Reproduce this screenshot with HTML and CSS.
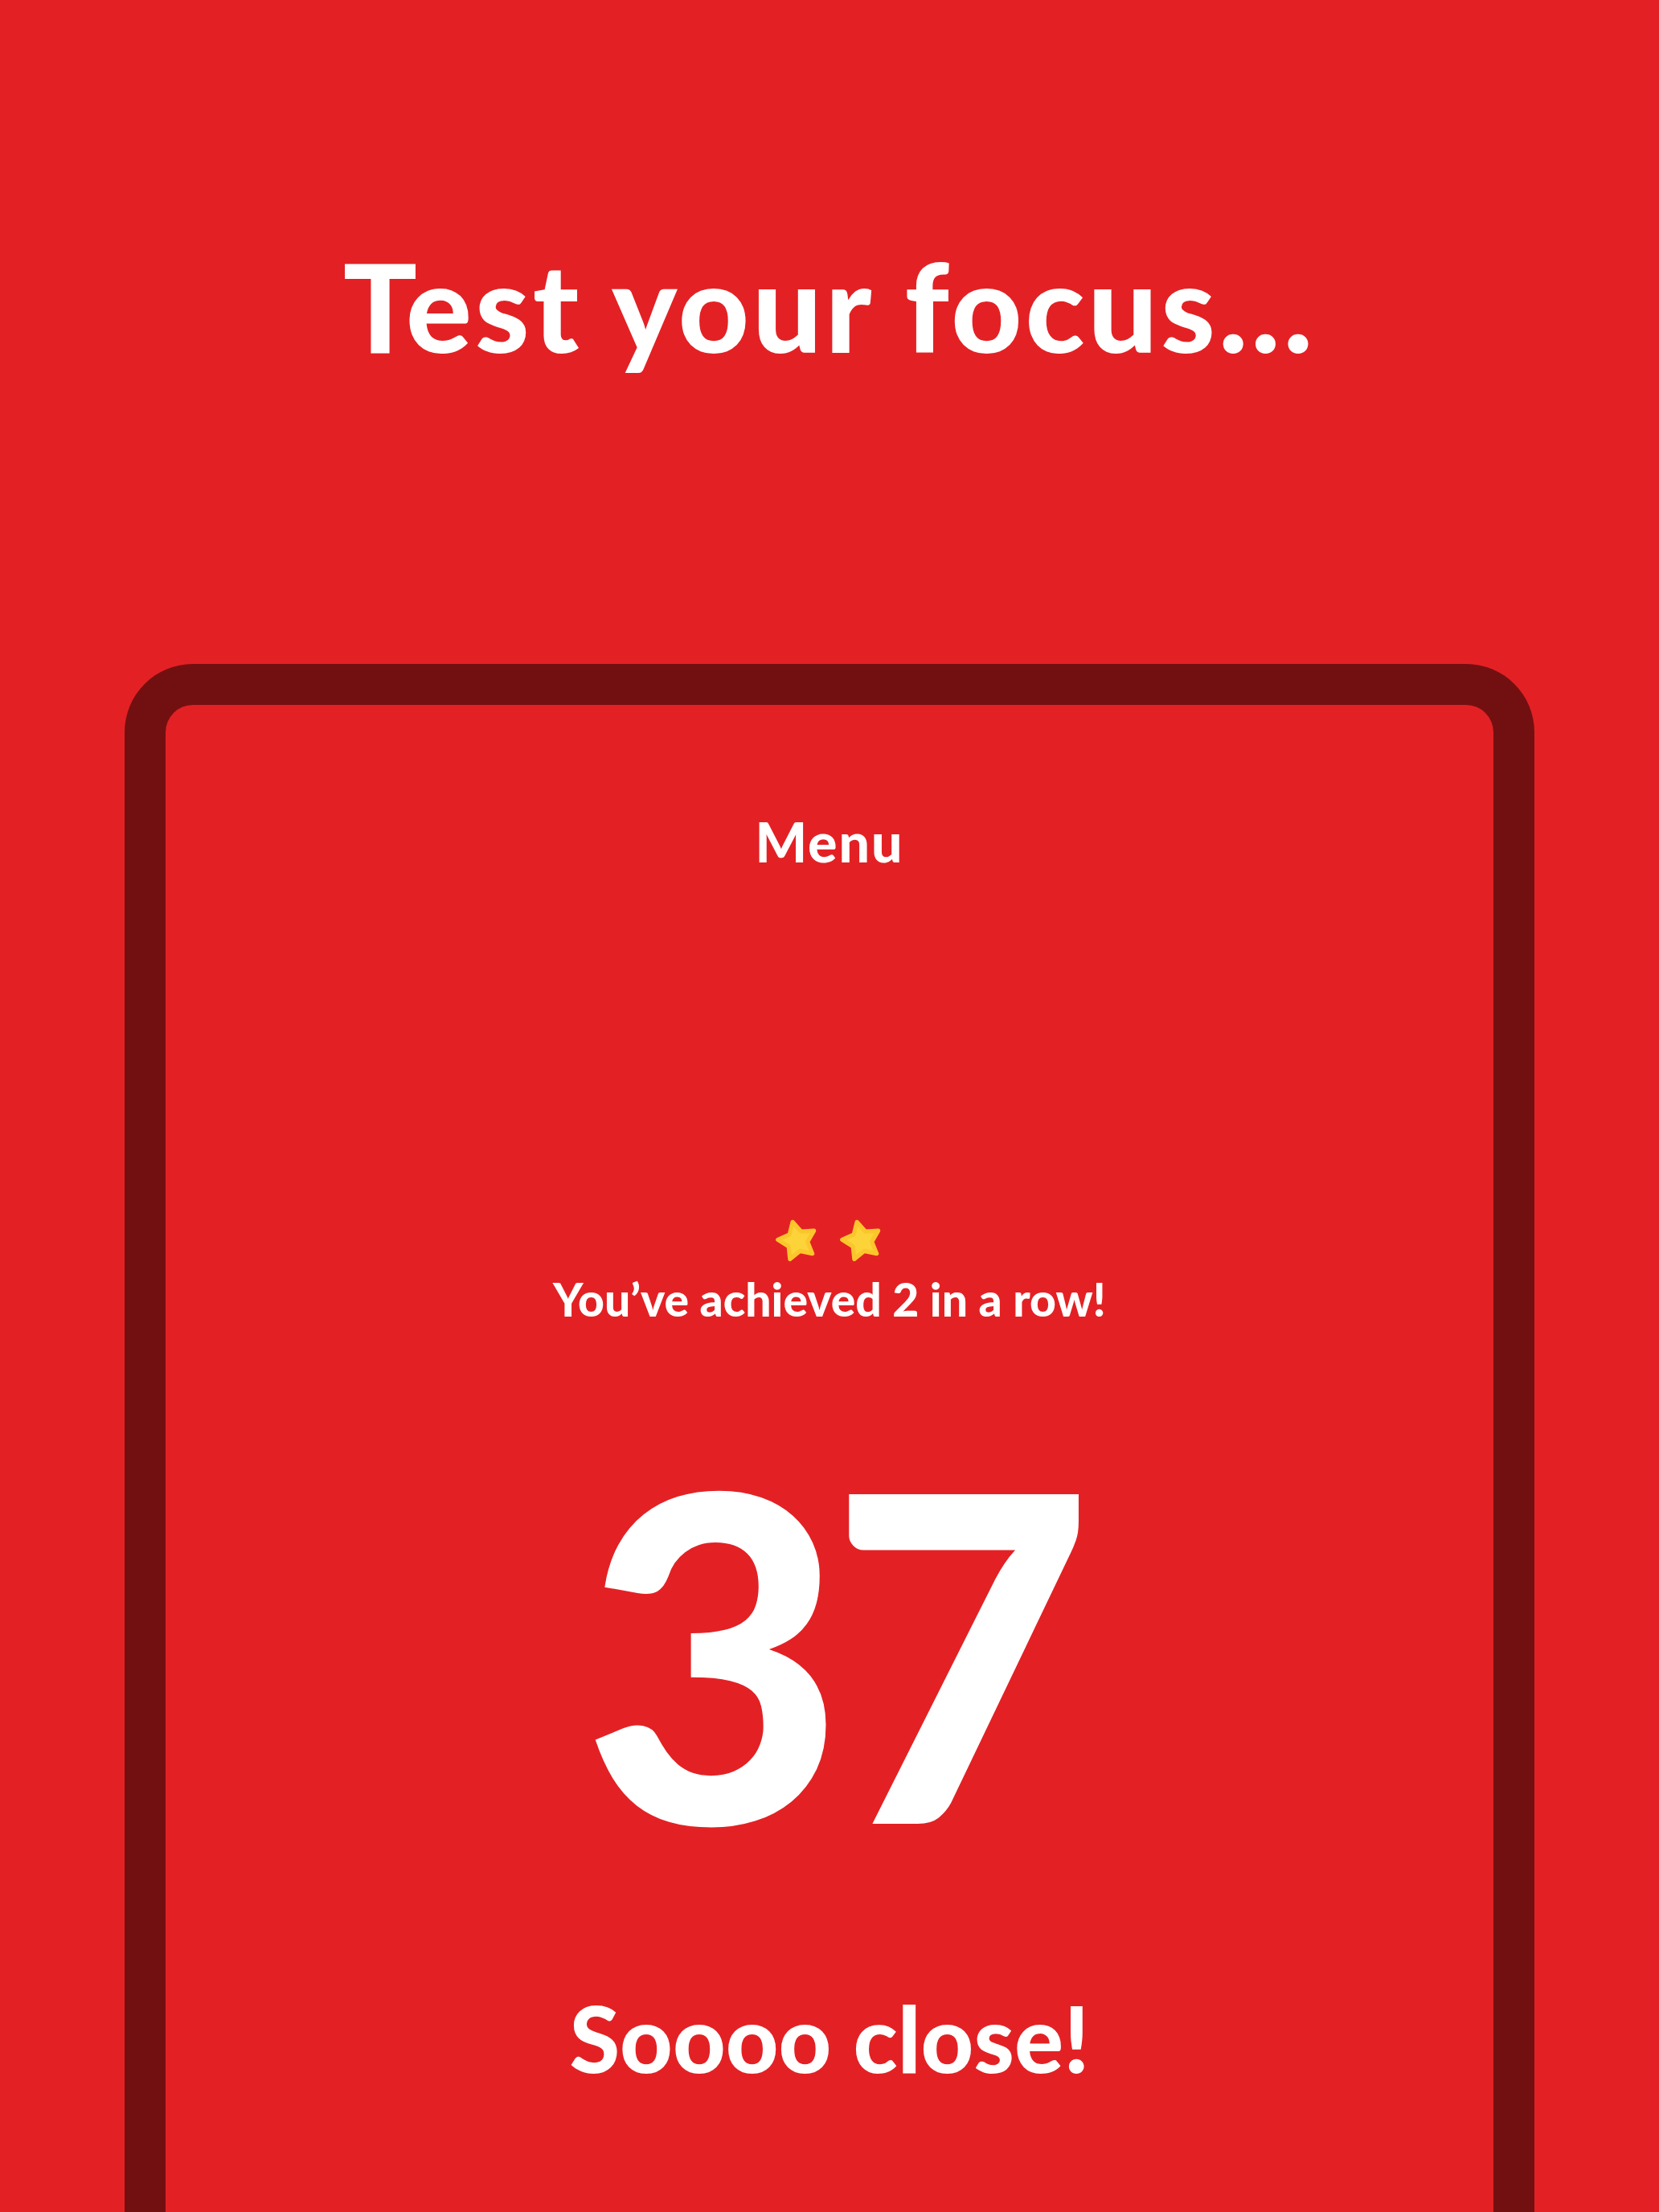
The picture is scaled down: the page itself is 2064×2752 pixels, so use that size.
FILE: index.html
```html
<!DOCTYPE html>
<html lang="en">
<head>
<meta charset="utf-8">
<title>Test your focus</title>
<link rel="stylesheet" href="styles.css">
</head>
<body>
  <h1 class="title">Test your focus...</h1>
  <section class="device">
    <div class="menu">Menu</div>
    <div class="stars">
      <svg class="star" viewBox="0 0 100 100" aria-hidden="true"><polygon transform="rotate(-14 50 50)" points="50,8 62.93,32.2 89.94,37.02 70.92,56.8 74.69,83.98 50,72 25.31,83.98 29.08,56.8 10.06,37.02 37.07,32.2"/></svg>
      <svg class="star" viewBox="0 0 100 100" aria-hidden="true"><polygon transform="rotate(-14 50 50)" points="50,8 62.93,32.2 89.94,37.02 70.92,56.8 74.69,83.98 50,72 25.31,83.98 29.08,56.8 10.06,37.02 37.07,32.2"/></svg>
    </div>
    <p class="streak">You’ve achieved 2 in a row!</p>
    <div class="score">37</div>
    <p class="verdict">Soooo close!</p>
  </section>
</body>
</html>
```
FILE: styles.css
```css
html, body {
  margin: 0;
  padding: 0;
  height: 2752px;
  overflow: hidden;
}
body {
  background: #e32124;
  color: #ffffff;
  font-family: "Lato", "Noto Sans", sans-serif;
  font-weight: 900;
  text-align: center;
}
.title {
  margin: 0;
  padding-top: 304px;
  font-size: 153px;
  line-height: 1;
  font-weight: 900;
  letter-spacing: 4px;
}
.device {
  box-sizing: border-box;
  margin: 369px 155px 0;
  height: 1926px;
  border: 51px solid #721011;
  border-bottom: 0;
  border-radius: 85px 85px 0 0;
  display: flex;
  flex-direction: column;
  align-items: center;
  padding-top: 136px;
}
.menu {
  font-size: 68px;
  line-height: 1;
  letter-spacing: 2px;
}
.stars {
  display: flex;
  gap: 22px;
  margin-top: 434px;
  height: 55px;
}
.star {
  width: 58px;
  height: 58px;
}
.star polygon {
  fill: #fdd33a;
  stroke: #fbc62c;
  stroke-width: 9;
  stroke-linejoin: round;
}
.streak {
  margin: 18px 0 0;
  font-size: 57px;
  line-height: 1;
}
.score {
  margin-top: 123px;
  font-size: 565px;
  line-height: 1;
  letter-spacing: -20px;
}
.verdict {
  margin: 145px 0 0;
  font-size: 114px;
  line-height: 1;
}
```
